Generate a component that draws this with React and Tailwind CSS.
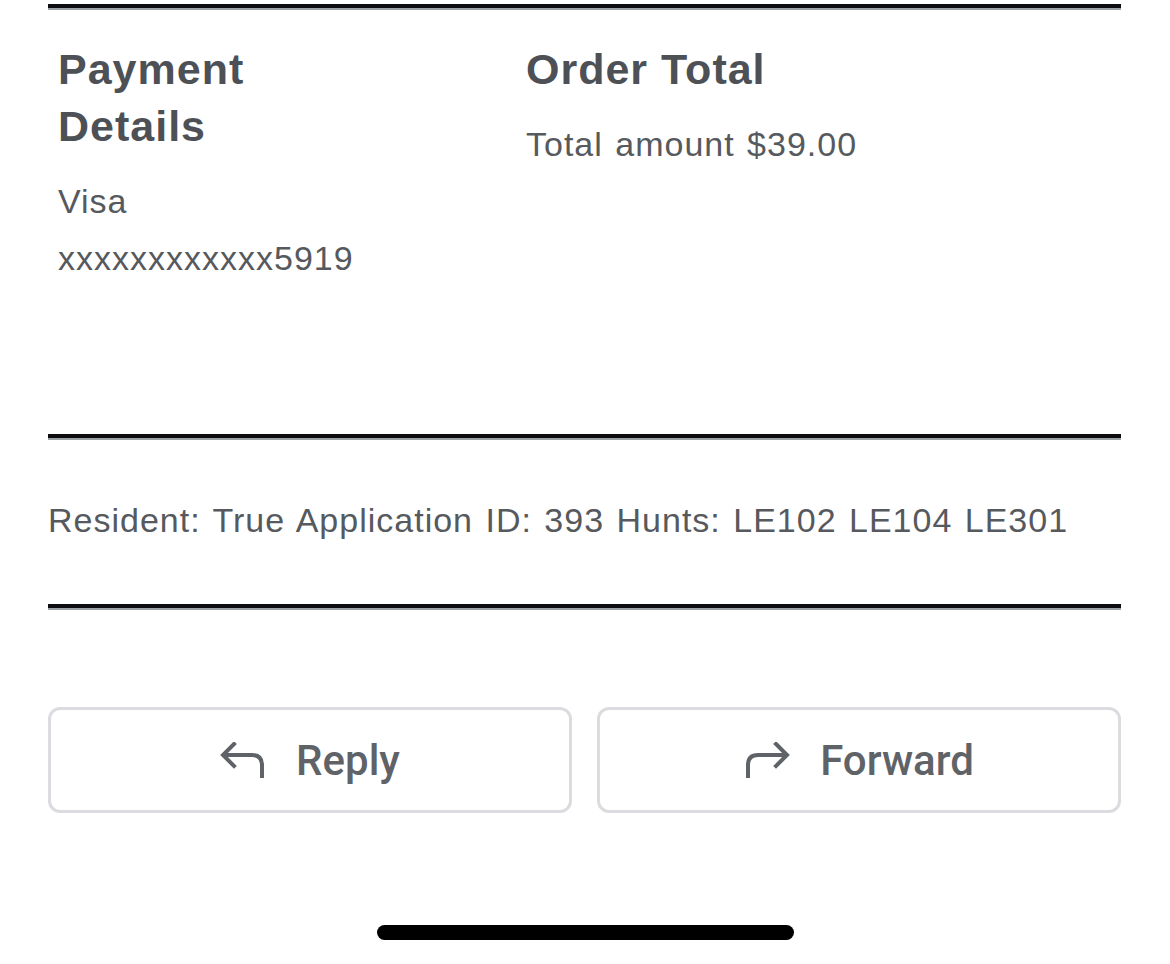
function Rule() {
  return <div className="h-[6px] border-t-[4px] border-[#0d0d0f] bg-[#9ca1a6]" />
}

function ReplyIcon() {
  return (
    <svg width="46" height="36" viewBox="0 0 46 36" fill="none" stroke="currentColor" strokeWidth="4" strokeLinecap="square">
      <path d="M14 2 L3 13 L14 24" strokeLinejoin="miter" />
      <path d="M4 13 H32 Q42 13 42 23 V34" />
    </svg>
  )
}

function ForwardIcon() {
  return (
    <svg width="46" height="36" viewBox="0 0 46 36" fill="none" stroke="currentColor" strokeWidth="4" strokeLinecap="square">
      <path d="M32 2 L43 13 L32 24" strokeLinejoin="miter" />
      <path d="M42 13 H14 Q4 13 4 23 V34" />
    </svg>
  )
}

export default function App() {
  return (
    <div className="w-[1170px] h-[964px] bg-white flex flex-col font-['Liberation_Sans',Arial,sans-serif]">
      <div className="pl-[48px] pr-[49px] pt-[4px]">
        <Rule />

        <div className="flex pt-[31px] h-[424px]">
          <div className="w-[478px] pl-[10px]">
            <h2 className="w-[260px] text-[43px] leading-[57px] font-bold tracking-[1px] text-[#4d5156]">Payment Details</h2>
            <div className="mt-[18px] text-[34px] leading-[57px] tracking-[1px] [word-spacing:2px] text-[#56595d]">
              <p>Visa</p>
              <p>xxxxxxxxxxxx5919</p>
            </div>
          </div>
          <div>
            <h2 className="text-[43px] leading-[57px] font-bold tracking-[1px] text-[#4d5156]">Order Total</h2>
            <p className="mt-[18px] text-[34px] leading-[57px] tracking-[1px] [word-spacing:2px] text-[#56595d]">Total amount $39.00</p>
          </div>
        </div>

        <Rule />

        <p className="mt-[52px] mb-[55px] text-[34px] leading-[57px] tracking-[1px] [word-spacing:2px] text-[#56595d]">
          Resident: True Application ID: 393 Hunts: LE102 LE104 LE301
        </p>

        <Rule />

        <div className="mt-[97px] grid grid-cols-2 gap-[25px] font-['Roboto',sans-serif] text-[#5f6368]">
          <button type="button" className="h-[106px] rounded-[12px] border-[3px] border-[#dadce0] flex items-center justify-center gap-[30px]">
            <ReplyIcon />
            <span className="text-[42px] font-medium">Reply</span>
          </button>
          <button type="button" className="h-[106px] rounded-[12px] border-[3px] border-[#dadce0] flex items-center justify-center gap-[30px]">
            <ForwardIcon />
            <span className="text-[42px] font-medium">Forward</span>
          </button>
        </div>
      </div>

      <div className="mt-[112px] mx-auto w-[417px] h-[15px] rounded-full bg-black" />
    </div>
  )
}
